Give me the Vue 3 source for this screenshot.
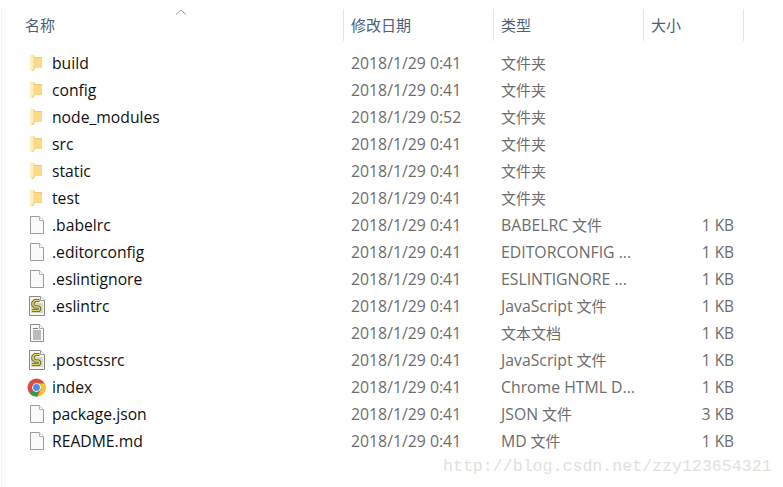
<template>
  <div class="explorer">
    <div class="header">
      <div class="col name-head">
        名称
        <svg class="sort" width="12" height="6" viewBox="0 0 12 6"><path d="M1 5.500 6 1l5 4.500" fill="none" stroke="#9a9a9a" /></svg>
      </div>
      <div class="col">修改日期</div>
      <div class="col">类型</div>
      <div class="col">大小</div>
    </div>
    <div class="list">
      <div v-for="file in files" :key="file.id" class="row">
        <div class="name">
          <span class="icon">
            <svg v-if="file.icon === 'folder'" width="14" height="18" viewBox="0 0 14 18">
              <path d="M1 1h3l1 2h7v11H5l-2 3H1z" fill="#f0cc6c" />
              <path d="M3.500 4H12v10H3.500z" fill="#fbd987" />
              <path d="M0 .500h3.500V14l-2 3H0z" fill="#fdefc0" />
            </svg>
            <svg v-else-if="file.icon === 'file'" width="16" height="18" viewBox="0 0 16 18">
              <path d="M1.500 .5h9l4 4v13h-13z" fill="#fafafa" stroke="#9c9c9c" />
              <path d="M10.500 .5v4h4" fill="#fff" stroke="#b5b5b5" />
            </svg>
            <svg v-else-if="file.icon === 'text'" width="16" height="18" viewBox="0 0 16 18">
              <path d="M1.500 .5h9l4 4v13h-13z" fill="#fafafa" stroke="#8f8f8f" />
              <path d="M10.500 .5v4h4" fill="#fff" stroke="#aaa" />
              <path d="M4 4.500h5M4 7h8M4 9h8M4 11h8M4 13h8M4 15h8" stroke="#7f7f7f" />
            </svg>
            <svg v-else-if="file.icon === 'script'" width="18" height="20" viewBox="0 0 18 20">
              <path d="M1.500 .5h11l4 4v15h-15z" fill="#f6f6f0" stroke="#8b8b84" />
              <path d="M12.500 .5v4h4" fill="#fff" stroke="#9c9c9c" />
              <path d="M3 7h12v10H3z" fill="#d5d5cc" />
              <path d="M11.500 4.500H7L5 6.500v2.500l2 2h3.500l1 1v1.500l-1 1H4" fill="none" stroke="#55552c" stroke-width="3.200" />
              <path d="M11.500 4.500H7L5 6.500v2.500l2 2h3.500l1 1v1.500l-1 1H4" fill="none" stroke="#e4dd57" stroke-width="1.600" />
            </svg>
            <svg v-else class="chrome" width="19" height="19" viewBox="0 0 19 19">
              <circle cx="9.500" cy="9.500" r="9" fill="#e04a3b" />
              <path d="M9.500 9.500 2.600 15.300A9 9 0 0 0 10.500 18.450z" fill="#2f9e4f" />
              <path d="M9.500 5.500h8.600a9 9 0 0 1-7.600 12.950L14 11z" fill="#f7c431" />
              <circle cx="9.500" cy="9.500" r="4.400" fill="#fff" />
              <circle cx="9.500" cy="9.500" r="3.400" fill="#4a8fe8" />
            </svg>
          </span>
          <span class="label">{{ file.name }}</span>
        </div>
        <div class="cell date">{{ file.date }}</div>
        <div class="cell"><span class="latin">{{ file.ext }}</span> {{ file.kind }}</div>
        <div class="cell size">{{ file.size }}</div>
      </div>
    </div>
    <div class="watermark">http://blog.csdn.net/zzy123654321</div>
  </div>
</template>

<script setup>
const files = [
  { id: 1, icon: 'folder', name: 'build', date: '2018/1/29 0:41', ext: '', kind: '文件夹', size: '' },
  { id: 2, icon: 'folder', name: 'config', date: '2018/1/29 0:41', ext: '', kind: '文件夹', size: '' },
  { id: 3, icon: 'folder', name: 'node_modules', date: '2018/1/29 0:52', ext: '', kind: '文件夹', size: '' },
  { id: 4, icon: 'folder', name: 'src', date: '2018/1/29 0:41', ext: '', kind: '文件夹', size: '' },
  { id: 5, icon: 'folder', name: 'static', date: '2018/1/29 0:41', ext: '', kind: '文件夹', size: '' },
  { id: 6, icon: 'folder', name: 'test', date: '2018/1/29 0:41', ext: '', kind: '文件夹', size: '' },
  { id: 7, icon: 'file', name: '.babelrc', date: '2018/1/29 0:41', ext: 'BABELRC', kind: '文件', size: '1 KB' },
  { id: 8, icon: 'file', name: '.editorconfig', date: '2018/1/29 0:41', ext: 'EDITORCONFIG ...', kind: '', size: '1 KB' },
  { id: 9, icon: 'file', name: '.eslintignore', date: '2018/1/29 0:41', ext: 'ESLINTIGNORE ...', kind: '', size: '1 KB' },
  { id: 10, icon: 'script', name: '.eslintrc', date: '2018/1/29 0:41', ext: 'JavaScript', kind: '文件', size: '1 KB' },
  { id: 11, icon: 'text', name: '', date: '2018/1/29 0:41', ext: '', kind: '文本文档', size: '1 KB' },
  { id: 12, icon: 'script', name: '.postcssrc', date: '2018/1/29 0:41', ext: 'JavaScript', kind: '文件', size: '1 KB' },
  { id: 13, icon: 'chrome', name: 'index', date: '2018/1/29 0:41', ext: 'Chrome HTML D...', kind: '', size: '1 KB' },
  { id: 14, icon: 'file', name: 'package.json', date: '2018/1/29 0:41', ext: 'JSON', kind: '文件', size: '3 KB' },
  { id: 15, icon: 'file', name: 'README.md', date: '2018/1/29 0:41', ext: 'MD', kind: '文件', size: '1 KB' }
]
</script>

<style>
html, body {
  background: #fff;
}
</style>

<style scoped>
.explorer {
  position: relative;
  width: 783px;
  height: 487px;
  overflow: hidden;
  box-sizing: border-box;
  padding-top: 9px;
  background: #fff;
  font-family: "Open Sans", "Noto Sans CJK SC", sans-serif;
  font-size: 15px;
}
.explorer::before {
  content: "";
  position: absolute;
  left: 1px;
  top: 9px;
  bottom: 0;
  width: 1px;
  background: #f4f4f4;
}
.header,
.row {
  display: grid;
  grid-template-columns: 343px 150px 150px 100px;
}
.header {
  height: 32px;
  color: #4c607a;
}
.col {
  position: relative;
  display: flex;
  align-items: center;
  padding-left: 8px;
  padding-bottom: 2px;
  border-right: 1px solid #e5e5e5;
  margin-right: -1px;
}
.name-head {
  padding-left: 25px;
}
.sort {
  position: absolute;
  left: 175px;
  top: -0.5px;
}
.list {
  padding-top: 8.5px;
}
.row {
  height: 27px;
  align-items: center;
  color: #6d6d6d;
}
.name {
  display: flex;
  align-items: center;
  min-width: 0;
  color: #111;
  font-size: 15.700px;
}
.icon {
  display: flex;
  justify-content: center;
  width: 20px;
  margin-left: 27px;
  margin-right: 5px;
}
.chrome {
  margin-right: 1px;
}
.cell {
  padding-left: 8px;
  white-space: nowrap;
}
.date,
.latin {
  font-size: 15.800px;
}
.size {
  padding-left: 0;
  padding-right: 9px;
  text-align: right;
  font-size: 15.400px;
}
.watermark {
  position: absolute;
  left: 443px;
  top: 457px;
  font-family: "Liberation Mono", monospace;
  font-size: 16.600px;
  line-height: 20px;
  color: #e2e2dc;
  white-space: nowrap;
}
</style>
